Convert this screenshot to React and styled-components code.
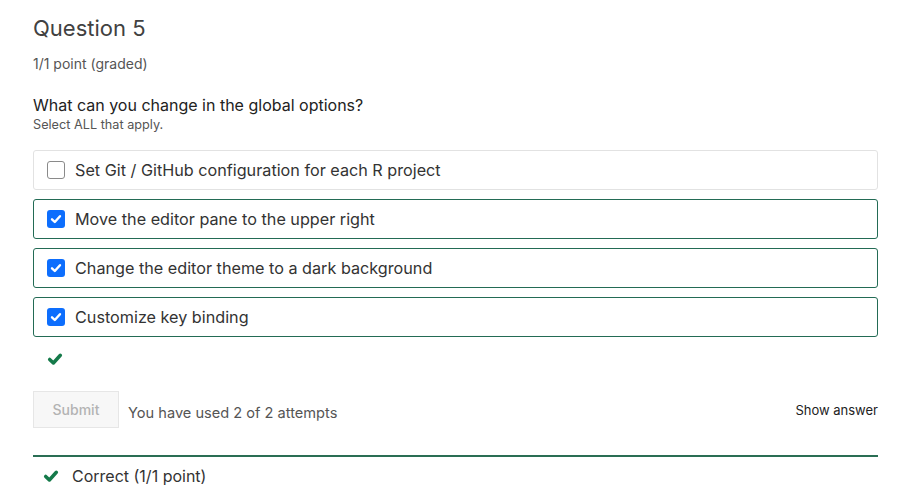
import React from 'react'
import styled, { createGlobalStyle } from 'styled-components'

const GlobalStyle = createGlobalStyle`
  body {
    margin: 0;
    background: #fff;
    font-family: Inter, "Noto Sans", sans-serif;
    color: #313131;
  }
`

const Page = styled.div`
  padding: 13px 31px 0 33px;
  display: flex;
  flex-direction: column;
`

const Title = styled.h2`
  margin: 0;
  font-size: 22px;
  font-weight: 400;
  line-height: 30px;
  color: #414141;
`

const Points = styled.div`
  margin-top: 13px;
  font-size: 14px;
  line-height: 16px;
  color: #555;
`

const Prompt = styled.div`
  margin-top: 23px;
  font-size: 16px;
  line-height: 20px;
  color: #222;
`

const Hint = styled.div`
  margin-top: 2px;
  font-size: 12.7px;
  line-height: 16px;
  color: #555;
`

const Options = styled.div`
  margin-top: 17px;
  display: flex;
  flex-direction: column;
  gap: 9px;
`

const Option = styled.label`
  display: flex;
  align-items: center;
  gap: 10px;
  height: 40px;
  box-sizing: border-box;
  padding: 0 13px;
  border: 1px solid ${p => (p.$checked ? '#236b55' : '#e2e2e2')};
  border-radius: 3px;
  font-size: 16.2px;
  color: #333;
`

const Box = styled.span`
  width: 18px;
  height: 18px;
  box-sizing: border-box;
  border-radius: 3px;
  display: flex;
  align-items: center;
  justify-content: center;
  background: ${p => (p.$checked ? '#0d6efd' : '#fff')};
  border: ${p => (p.$checked ? 'none' : '1px solid #8a8a8a')};
`

const Tick = ({ color = '#fff', size = 12, stroke = 2.4 }) => (
  <svg width={size} height={size} viewBox="0 0 12 12" fill="none">
    <path d="M2 6.3 L4.8 9 L10 3.2" stroke={color} strokeWidth={stroke} strokeLinecap="round" strokeLinejoin="round" />
  </svg>
)

const Status = styled.div`
  margin-top: 13px;
  padding-left: 14px;
  height: 18px;
  display: flex;
  align-items: center;
`

const Actions = styled.div`
  margin-top: 23px;
  display: flex;
  align-items: center;
`

const SubmitButton = styled.button`
  width: 86px;
  height: 37px;
  border: 1px solid #e6e6e6;
  background: #f7f7f7;
  color: #b3b3b3;
  font-family: inherit;
  font-size: 14px;
  font-weight: 500;
  border-radius: 0;
`

const Attempts = styled.span`
  margin-left: 9px;
  margin-top: 7px;
  font-size: 14.6px;
  color: #555;
`

const ShowAnswer = styled.span`
  margin-left: auto;
  font-size: 13px;
  color: #222;
`

const Result = styled.div`
  margin-top: 27px;
  border-top: 2px solid #2a6e54;
  display: flex;
  align-items: center;
  gap: 13px;
  padding: 9px 0 0 10px;
  font-size: 16px;
  color: #333;
`

const options = [
  { text: 'Set Git / GitHub configuration for each R project', checked: false },
  { text: 'Move the editor pane to the upper right', checked: true },
  { text: 'Change the editor theme to a dark background', checked: true },
  { text: 'Customize key binding', checked: true },
]

const App = () => {
  return (
    <Page>
      <GlobalStyle />
      <Title>Question 5</Title>
      <Points>1/1 point (graded)</Points>
      <Prompt>What can you change in the global options?</Prompt>
      <Hint>Select ALL that apply.</Hint>
      <Options>
        {options.map(o => (
          <Option key={o.text} $checked={o.checked}>
            <Box $checked={o.checked}>{o.checked && <Tick />}</Box>
            {o.text}
          </Option>
        ))}
      </Options>
      <Status>
        <Tick color="#157a4a" size={16} stroke={2.6} />
      </Status>
      <Actions>
        <SubmitButton disabled>Submit</SubmitButton>
        <Attempts>You have used 2 of 2 attempts</Attempts>
        <ShowAnswer>Show answer</ShowAnswer>
      </Actions>
      <Result>
        <Tick color="#157a4a" size={16} stroke={2.6} />
        Correct (1/1 point)
      </Result>
    </Page>
  )
}

export default App
